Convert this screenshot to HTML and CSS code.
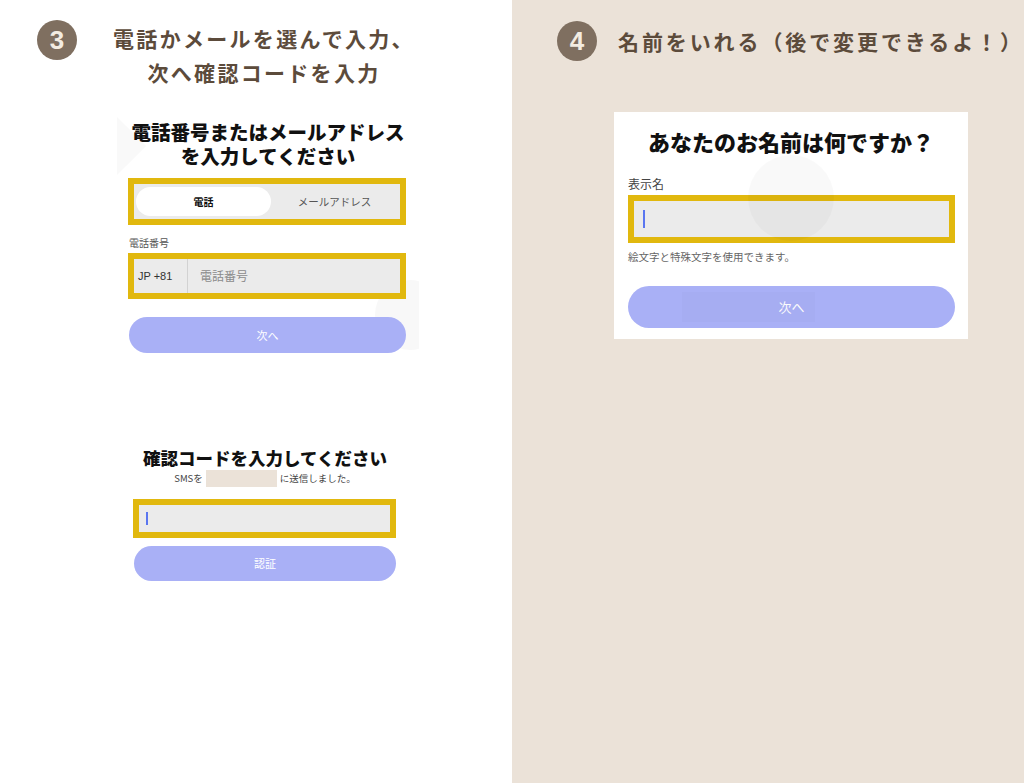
FILE: index.html
```html
<!DOCTYPE html>
<html lang="ja">

<head>
    <meta charset="UTF-8">
    <meta name="viewport" content="width=device-width, initial-scale=1.0">
    <title>登録の流れ</title>
    <link rel="stylesheet" href="styles.css">
</head>

<body>
    <div class="page">
        <section class="panel panel-left">
            <header class="step">
                <span class="step-num">3</span>
                <h2 class="step-title">電話かメールを選んで入力、<br>次へ確認コードを入力</h2>
            </header>

            <div class="shot shot-phone">
                <span class="deco deco-corner"></span>
                <span class="deco deco-round"></span>
                <h3 class="shot-title">電話番号またはメールアドレス<br>を入力してください</h3>
                <div class="mark toggle">
                    <span class="toggle-on">電話</span>
                    <span class="toggle-off">メールアドレス</span>
                </div>
                <div class="field-label">電話番号</div>
                <div class="mark phone-field">
                    <span class="country">JP +81</span>
                    <span class="placeholder">電話番号</span>
                </div>
                <div class="btn btn-phone">次へ</div>
            </div>

            <div class="shot shot-code">
                <h3 class="shot-title code-title">確認コードを入力してください</h3>
                <div class="sms-line">
                    <span>SMSを</span>
                    <span class="masked"></span>
                    <span>に送信しました。</span>
                </div>
                <div class="mark code-field"><span class="cursor"></span></div>
                <div class="btn btn-code">認証</div>
            </div>
        </section>

        <section class="panel panel-right">
            <header class="step step-right">
                <span class="step-num">4</span>
                <h2 class="step-title step-title-line">名前をいれる（後で変更できるよ！）</h2>
            </header>

            <div class="shot shot-name">
                <span class="deco deco-circle"></span>
                <span class="deco deco-label"></span>
                <h3 class="shot-title name-title">あなたのお名前は何ですか？</h3>
                <div class="field-label name-label">表示名</div>
                <div class="mark name-field"><span class="cursor cursor-tall"></span></div>
                <div class="helper">絵文字と特殊文字を使用できます。</div>
                <div class="btn btn-name">次へ</div>
            </div>
        </section>
    </div>
</body>

</html>
```

FILE: styles.css
```css
body {
    margin: 0;
    font-family: "Noto Sans CJK JP", "Noto Sans", sans-serif;
    color: #111;
}

.page {
    display: grid;
    grid-template-columns: 512px 512px;
    height: 783px;
    overflow: hidden;
}

.panel-left {
    background-color: #ffffff;
}

.panel-right {
    background-color: #ebe2d8;
    /* fondo beige */
}

/* cabecera con número */
.step {
    display: flex;
    align-items: flex-start;
    padding: 20px 0 0 37px;
}

.step-num {
    flex: none;
    width: 40px;
    height: 40px;
    border-radius: 50%;
    background-color: #7f6f60;
    color: #f3ece2;
    font-family: "Liberation Sans", sans-serif;
    font-weight: 700;
    font-size: 26px;
    display: flex;
    justify-content: center;
    align-items: center;
}

.step-title {
    margin: 1px 0 0 36px;
    width: 302px;
    text-align: center;
    font-size: 21px;
    line-height: 34px;
    letter-spacing: 2.3px;
    font-weight: 700;
    color: #5c4b3b;
    white-space: nowrap;
}

.step-right {
    padding: 21px 0 0 45px;
}

.step-title-line {
    margin: 0 0 0 21px;
    width: auto;
    text-align: left;
    line-height: 40px;
    letter-spacing: 2.9px;
}

/* capturas */
.shot {
    position: relative;
    box-sizing: border-box;
}

.shot-title {
    position: relative;
    margin: 0;
    text-align: center;
    font-weight: 900;
    color: #111;
    white-space: nowrap;
}

.mark {
    position: relative;
    box-sizing: border-box;
    border: 6px solid #e1b80e;
    background-color: #ebebeb;
}

.btn {
    position: relative;
    box-sizing: border-box;
    background-color: #a9b0f6;
    color: #ffffff;
    text-align: center;
}

.field-label {
    position: relative;
    color: #555;
}

.cursor {
    display: block;
    width: 2px;
    height: 13px;
    background-color: #5a76f0;
}

.deco {
    position: absolute;
    pointer-events: none;
}

/* paso 3: teléfono */
.shot-phone {
    margin: 23px 0 0 117px;
    width: 302px;
    height: 241px;
    padding-top: 8px;
    overflow: hidden;
}

.shot-phone .shot-title {
    font-size: 19.5px;
    line-height: 24px;
}

.deco-corner {
    left: -24px;
    top: 12px;
    width: 44px;
    height: 44px;
    background-color: #f9f9f9;
    transform: rotate(45deg);
}

.deco-round {
    right: -26px;
    top: 168px;
    width: 70px;
    height: 70px;
    border-radius: 50%;
    background-color: #f8f8f8;
}

.toggle {
    margin: 10px 0 0 11px;
    width: 278px;
    height: 47px;
    padding: 3px 2px;
    display: flex;
    align-items: center;
}

.toggle-on {
    flex: none;
    width: 135px;
    height: 29px;
    border-radius: 15px;
    background-color: #ffffff;
    font-size: 10px;
    font-weight: 700;
    line-height: 29px;
    text-align: center;
}

.toggle-off {
    flex: 1;
    text-align: center;
    font-size: 10.5px;
    color: #555;
    line-height: 29px;
}

.shot-phone .field-label {
    margin: 11px 0 0 12px;
    font-size: 10px;
    line-height: 14px;
}

.phone-field {
    margin: 3px 0 0 11px;
    width: 278px;
    height: 46px;
    display: flex;
    align-items: stretch;
}

.country {
    width: 54px;
    padding-left: 4px;
    box-sizing: border-box;
    border-right: 1px solid #d2d2d2;
    font-family: "Liberation Sans", sans-serif;
    font-size: 11px;
    line-height: 34px;
    color: #333;
}

.placeholder {
    padding-left: 12px;
    font-size: 12px;
    line-height: 34px;
    color: #8c8c8c;
}

.btn-phone {
    margin: 18px 0 0 12px;
    width: 277px;
    height: 36px;
    border-radius: 18px;
    font-size: 11px;
    line-height: 36px;
}

/* paso 3: código */
.shot-code {
    margin: 95px 0 0 133px;
    width: 264px;
}

.code-title {
    font-size: 17.5px;
    line-height: 20px;
}

.sms-line {
    margin-top: 1px;
    display: flex;
    justify-content: center;
    align-items: center;
    gap: 3px;
    height: 18px;
    font-size: 9.5px;
    color: #444;
}

.masked {
    width: 71px;
    height: 17px;
    background-color: #ebe2d8;
}

.code-field {
    margin-top: 12px;
    width: 263px;
    height: 39px;
    padding-left: 7px;
    display: flex;
    align-items: center;
}

.btn-code {
    margin: 8px 0 0 1px;
    width: 262px;
    height: 35px;
    border-radius: 18px;
    font-size: 11px;
    line-height: 35px;
}

/* paso 4: nombre */
.shot-name {
    margin: 51px 0 0 102px;
    width: 354px;
    height: 227px;
    padding: 14px 0 0 14px;
    background-color: #ffffff;
    overflow: hidden;
}

.name-title {
    margin-left: -14px;
    font-size: 22px;
    line-height: 30px;
}

.deco-circle {
    left: 134px;
    top: 43px;
    width: 86px;
    height: 86px;
    border-radius: 50%;
    background-color: rgba(0, 0, 0, 0.025);
    z-index: 1;
}

.deco-label {
    left: 68px;
    top: 180px;
    width: 133px;
    height: 30px;
    background-color: rgba(0, 0, 0, 0.015);
    z-index: 1;
}

.name-label {
    margin-top: 20px;
    font-size: 12px;
    line-height: 16px;
    color: #444;
}

.name-field {
    margin-top: 3px;
    width: 327px;
    height: 48px;
    padding-left: 9px;
    display: flex;
    align-items: center;
}

.cursor-tall {
    height: 18px;
}

.helper {
    margin-top: 7px;
    font-size: 10.5px;
    line-height: 14px;
    color: #666;
}

.btn-name {
    margin-top: 22px;
    width: 327px;
    height: 42px;
    border-radius: 21px;
    font-size: 13px;
    line-height: 42px;
}
```
